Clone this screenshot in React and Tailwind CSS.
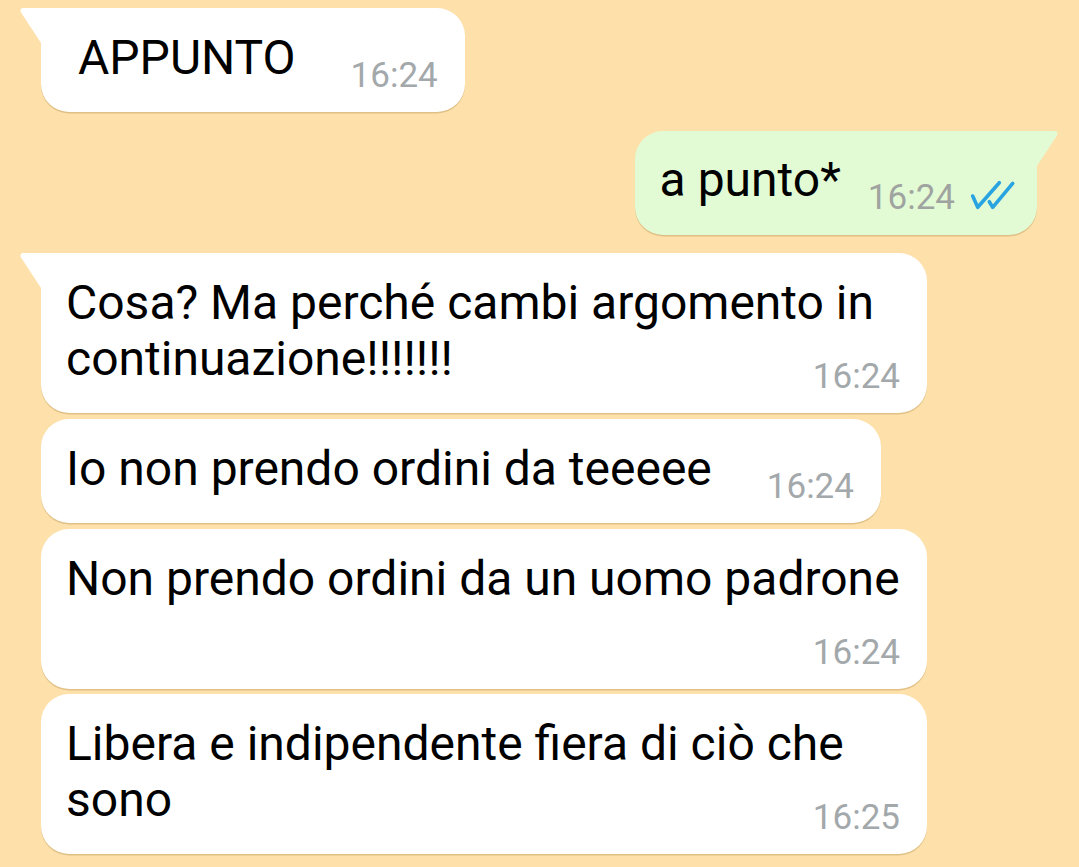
import React from 'react';

const font = { fontFamily: 'Roboto, "Noto Sans", Arial, sans-serif' };

function TailLeft() {
  return (
    <svg width="21" height="35" viewBox="0 0 21 35" className="shrink-0">
      <path d="M3 0 H21 V35 L1 4.5 Q-0.6 0 3 0 Z" fill="#ffffff" />
    </svg>
  );
}

function TailRight({ color }) {
  return (
    <svg width="21" height="35" viewBox="0 0 21 35" className="shrink-0">
      <path d="M18 0 H0 V35 L20 4.5 Q21.6 0 18 0 Z" fill={color} />
    </svg>
  );
}

function Ticks() {
  return (
    <svg
      width="48"
      height="30"
      viewBox="0 0 48 30"
      fill="none"
      stroke="#2aa4e0"
      strokeWidth="3.6"
      strokeLinecap="round"
      strokeLinejoin="round"
      className="ml-[13px]"
    >
      <path d="M4.7 16 L9.7 27.3 L31.3 2.7" />
      <path d="M21.3 21.7 L24.7 27.3 L44.7 3.3" />
    </svg>
  );
}

function Received({ text, time, tail, extraPad, className = '' }) {
  return (
    <div className={`flex items-start ${tail ? '' : 'pl-[21px]'} ${className}`}>
      {tail && <TailLeft />}
      <div
        className={`flow-root max-w-[886px] bg-white rounded-[28px] ${tail ? 'rounded-tl-none' : ''} ${extraPad ? 'pl-[37px]' : 'pl-[25px]'} pr-[27px] pt-[22px] pb-[18px] shadow-[0_1.5px_0.5px_rgba(150,110,40,0.28)]`}
      >
        <p className="text-[48px] leading-[56px] text-black">
          {text}
          <span className="float-right ml-[55px] mt-[28px] text-[35px] leading-[36px] text-[#a3a8ab]">{time}</span>
        </p>
      </div>
    </div>
  );
}

function Sent({ text, time, className = '' }) {
  return (
    <div className={`flex items-start justify-end ${className}`}>
      <div className="flow-root max-w-[886px] bg-[#e3fbd5] rounded-[28px] rounded-tr-none pl-[25px] pr-[21px] pt-[21px] pb-[19px] shadow-[0_1.5px_0.5px_rgba(150,110,40,0.28)]">
        <p className="text-[48px] leading-[56px] text-black">
          {text}
          <span className="float-right ml-[27px] mt-[28px] flex items-start">
            <span className="text-[35px] leading-[36px] text-[#a0a4a0]">{time}</span>
            <Ticks />
          </span>
        </p>
      </div>
      <TailRight color="#e3fbd5" />
    </div>
  );
}

export default function App() {
  return (
    <div style={font} className="w-[1079px] h-[867px] overflow-hidden bg-[#fde0aa] pl-[20px] pr-[21px] pt-[8px] flex flex-col">
      <Received text="APPUNTO" time="16:24" tail extraPad />
      <Sent text="a punto*" time="16:24" className="mt-[19px]" />
      <Received text="Cosa? Ma perché cambi argomento in continuazione!!!!!!!" time="16:24" tail className="mt-[18px]" />
      <Received text="Io non prendo ordini da teeeee" time="16:24" className="mt-[6px]" />
      <Received text="Non prendo ordini da un uomo padrone" time="16:24" className="mt-[6px]" />
      <Received text="Libera e indipendente fiera di ciò che sono" time="16:25" className="mt-[5px]" />
    </div>
  );
}
